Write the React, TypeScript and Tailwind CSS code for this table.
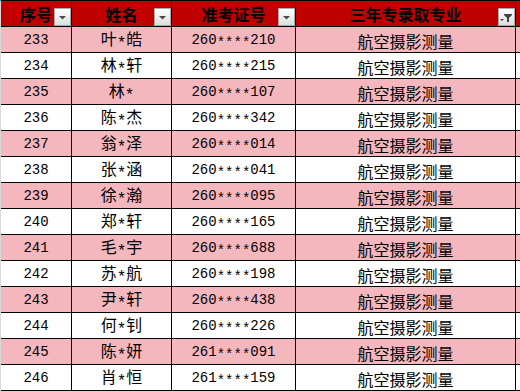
import React from "react";

const rows: [string, string, string][] = [
  ["233", "叶*皓", "260****210"],
  ["234", "林*轩", "260****215"],
  ["235", "林*", "260****107"],
  ["236", "陈*杰", "260****342"],
  ["237", "翁*泽", "260****014"],
  ["238", "张*涵", "260****041"],
  ["239", "徐*瀚", "260****095"],
  ["240", "郑*轩", "260****165"],
  ["241", "毛*宇", "260****688"],
  ["242", "苏*航", "260****198"],
  ["243", "尹*轩", "260****438"],
  ["244", "何*钊", "260****226"],
  ["245", "陈*妍", "261****091"],
  ["246", "肖*恒", "261****159"],
];

const cjk = { fontFamily: '"Liberation Mono", "Noto Sans CJK SC", monospace' };

function Stars({ text }: { text: string }) {
  const parts = text.split(/(\*)/);
  return (
    <>
      {parts.map((p, i) =>
        p === "*" ? (
          <span key={i} className="relative top-[3px]">
            *
          </span>
        ) : (
          <span key={i}>{p}</span>
        )
      )}
    </>
  );
}

function DropButton({ filter }: { filter?: boolean }) {
  return (
    <div className="absolute right-0 bottom-0 w-[17px] h-[18px] border border-[#a9a9a9] bg-gradient-to-b from-[#ffffff] to-[#dedede] flex items-center justify-center">
      {filter ? (
        <svg width="15" height="16" viewBox="0 0 15 16">
          <path d="M1 10 L5 10 L3 12 Z" fill="#444" />
          <path d="M5 5 L13 5 L13 6 L10 9 L10 13 L8 13 L8 9 L5 6 Z" fill="#444" />
        </svg>
      ) : (
        <svg width="9" height="5" viewBox="0 0 9 5">
          <path d="M1 1 L8 1 L4.5 4.5 Z" fill="#4a4a4a" />
        </svg>
      )}
    </div>
  );
}

export default function App() {
  const widths = ["w-[71px]", "w-[100px]", "w-[124px]", "w-[220px]"];
  return (
    <div className="w-[520px] h-[391px] bg-white border-l border-l-[#d9d9d9] border-t border-t-black overflow-hidden" style={cjk}>
      <div className="flex h-[26px] border-b border-black bg-[#c00000]">
        {["序号", "姓名", "准考证号", "三年专录取专业"].map((h, i) => (
          <div
            key={h}
            className={`${widths[i]} relative shrink-0 border-r border-black flex items-center justify-center text-[16px] font-bold text-black pt-[1px]`}
            style={{ fontFamily: '"Noto Sans CJK SC", sans-serif' }}
          >
            {h}
            <DropButton filter={i === 3} />
          </div>
        ))}
      </div>
      {rows.map((r, idx) => (
        <div
          key={r[0]}
          className={`flex h-[26px] border-b border-black ${idx % 2 === 0 ? "bg-[#f4b7be]" : "bg-white"}`}
        >
          <div className={`${widths[0]} shrink-0 border-r border-black flex items-center justify-center text-[14px] pt-[2px]`}>
            {r[0]}
          </div>
          <div className={`${widths[1]} shrink-0 border-r border-black flex items-center justify-center text-[16px] pt-[2px]`}>
            <Stars text={r[1]} />
          </div>
          <div className={`${widths[2]} shrink-0 border-r border-black flex items-center justify-center text-[14px] pt-[2px]`}>
            <Stars text={r[2]} />
          </div>
          <div
            className={`${widths[3]} shrink-0 border-r border-black flex items-center justify-center text-[16px] pt-[2px]`}
            style={{ fontFamily: '"Noto Sans CJK SC", sans-serif' }}
          >
            航空摄影测量
          </div>
        </div>
      ))}
    </div>
  );
}
